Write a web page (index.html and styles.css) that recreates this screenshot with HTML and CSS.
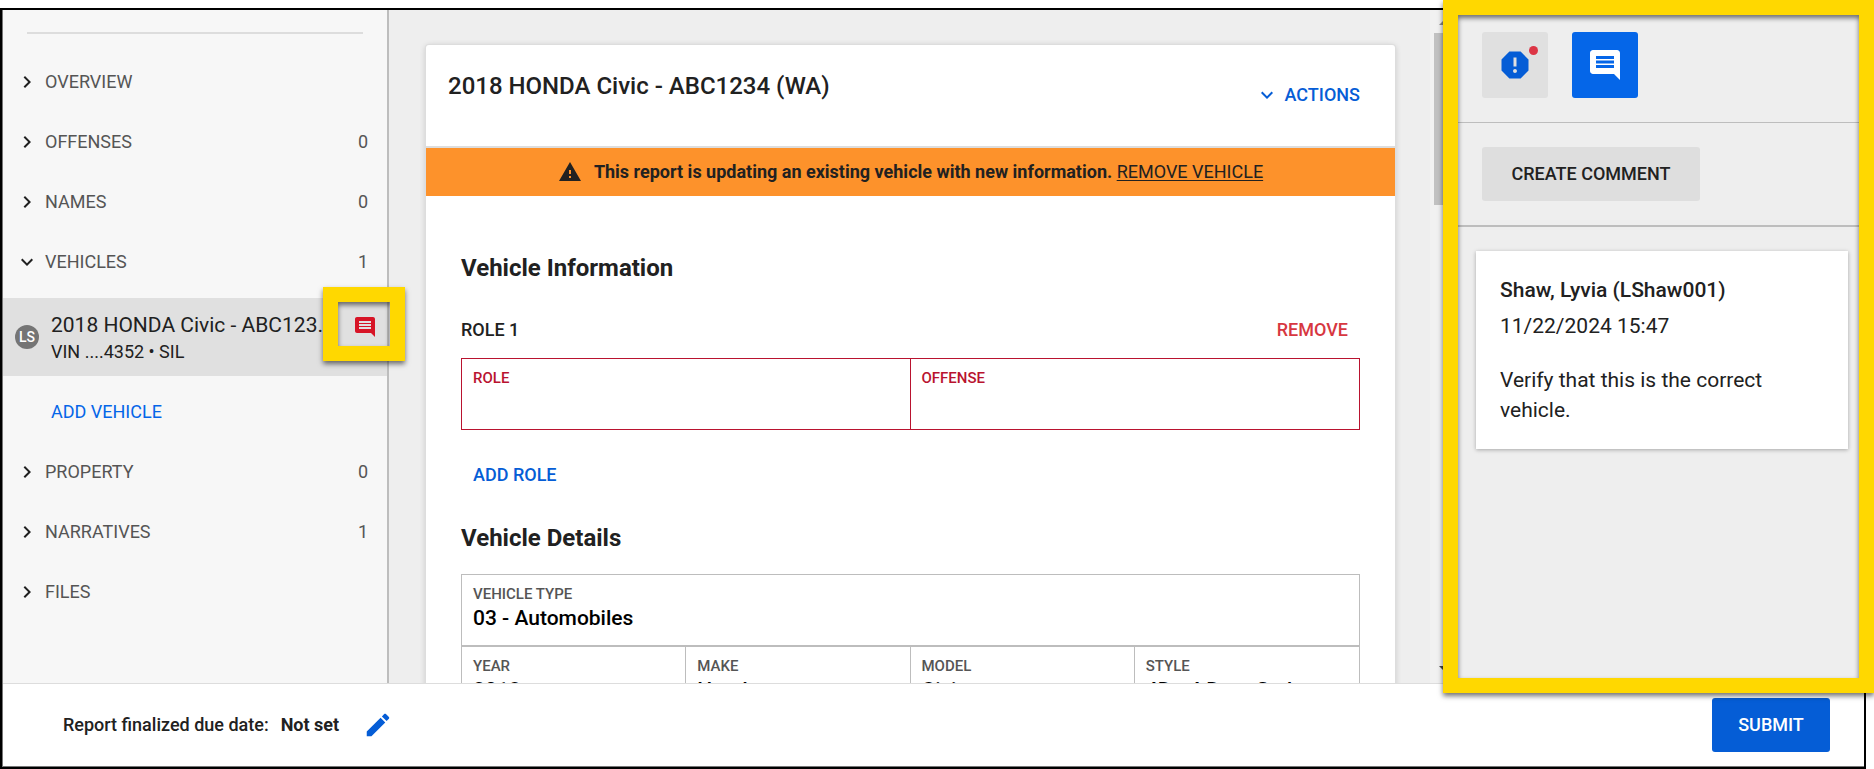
FILE: index.html
```html
<!DOCTYPE html>
<html lang="en">
<head>
<meta charset="utf-8">
<title>Vehicle report</title>
<link rel="stylesheet" href="styles.css">
</head>
<body>
<svg class="sprite" aria-hidden="true">
  <symbol id="right" viewBox="0 0 24 24"><path d="M10 6 8.59 7.41 13.17 12l-4.58 4.59L10 18l6-6z"/></symbol>
  <symbol id="down" viewBox="0 0 24 24"><path d="M7.41 8.59 12 13.17l4.59-4.58L18 10l-6 6-6-6z"/></symbol>
  <symbol id="comment" viewBox="0 0 24 24"><path d="M21.99 4c0-1.1-.89-2-1.99-2H4c-1.1 0-2 .9-2 2v12c0 1.1.9 2 2 2h14l4 4-.01-18zM18 14H6v-2h12v2zm0-3H6V9h12v2zm0-3H6V6h12v2z"/></symbol>
  <symbol id="report" viewBox="0 0 24 24"><path d="M15.73 3H8.27L3 8.27v7.46L8.27 21h7.46L21 15.73V8.27L15.73 3zM12 17.3c-.72 0-1.3-.58-1.3-1.3s.58-1.3 1.3-1.3 1.3.58 1.3 1.3-.58 1.3-1.3 1.3zm1-4.3h-2V7h2v6z"/></symbol>
  <symbol id="warning" viewBox="0 0 24 24"><path d="M1 21h22L12 2 1 21zm12-3h-2v-2h2v2zm0-4h-2v-4h2v4z"/></symbol>
  <symbol id="edit" viewBox="0 0 24 24"><path d="M3 17.25V21h3.75L17.81 9.94l-3.75-3.75L3 17.25zM20.71 7.04c.39-.39.39-1.02 0-1.41l-2.34-2.34c-.39-.39-1.02-.39-1.41 0l-1.83 1.83 3.75 3.75 1.83-1.83z"/></symbol>
</svg>

<div class="frame">
  <div class="workspace">
    <nav class="sidebar" aria-label="Report sections">
      <button class="nav-row"><svg class="icon"><use href="#right"/></svg><span class="nav-name">OVERVIEW</span></button>
      <button class="nav-row"><svg class="icon"><use href="#right"/></svg><span class="nav-name">OFFENSES</span><span>0</span></button>
      <button class="nav-row"><svg class="icon"><use href="#right"/></svg><span class="nav-name">NAMES</span><span>0</span></button>
      <button class="nav-row"><svg class="icon"><use href="#down"/></svg><span class="nav-name">VEHICLES</span><span>1</span></button>
      <div class="vehicle">
        <span class="avatar">LS</span>
        <div class="vehicle-text">
          <div class="vehicle-name">2018 HONDA Civic - ABC1234 (WA)</div>
          <div class="vehicle-vin">VIN ....4352 • SIL</div>
        </div>
        <div class="vehicle-comment">
          <svg class="icon"><use href="#comment"/></svg>
          <div class="callout callout-small"></div>
        </div>
      </div>
      <button class="add-vehicle">ADD VEHICLE</button>
      <button class="nav-row"><svg class="icon"><use href="#right"/></svg><span class="nav-name">PROPERTY</span><span>0</span></button>
      <button class="nav-row"><svg class="icon"><use href="#right"/></svg><span class="nav-name">NARRATIVES</span><span>1</span></button>
      <button class="nav-row"><svg class="icon"><use href="#right"/></svg><span class="nav-name">FILES</span></button>
    </nav>

    <main class="content">
      <section class="card">
        <header class="card-header">
          <h1>2018 HONDA Civic - ABC1234 (WA)</h1>
          <button class="text-button actions"><svg class="icon"><use href="#down"/></svg>ACTIONS</button>
        </header>
        <div class="banner">
          <svg class="icon"><use href="#warning"/></svg>
          <p><strong>This report is updating an existing vehicle with new information.</strong> <a href="#remove">REMOVE VEHICLE</a></p>
        </div>
        <div class="card-body">
          <h2>Vehicle Information</h2>
          <div class="role-header">
            <h3>ROLE 1</h3>
            <button class="text-button danger">REMOVE</button>
          </div>
          <div class="fields invalid">
            <div class="field half"><label for="role">ROLE</label><input id="role" type="text"></div>
            <div class="field half"><label for="offense">OFFENSE</label><input id="offense" type="text"></div>
          </div>
          <button class="text-button add-role">ADD ROLE</button>
          <h2>Vehicle Details</h2>
          <div class="fields details">
            <div class="field full"><label for="type">VEHICLE TYPE</label><input id="type" type="text" value="03 - Automobiles"></div>
            <div class="field"><label for="year">YEAR</label><input id="year" type="text" value="2018"></div>
            <div class="field"><label for="make">MAKE</label><input id="make" type="text" value="Honda"></div>
            <div class="field"><label for="model">MODEL</label><input id="model" type="text" value="Civic"></div>
            <div class="field"><label for="style">STYLE</label><input id="style" type="text" value="4D - 4 Door Sedan"></div>
          </div>
        </div>
      </section>
    </main>

    <div class="scrollbar" aria-hidden="true">
      <svg class="arrow arrow-up" viewBox="0 0 10 5"><path d="M0 5 5 0l5 5z"/></svg>
      <div class="thumb"></div>
      <svg class="arrow arrow-down" viewBox="0 0 10 5"><path d="M0 0l5 5 5-5z"/></svg>
    </div>

    <aside class="panel">
      <div class="panel-tabs">
        <button class="tab" aria-label="Issues"><svg><use href="#report"/></svg><span class="badge"></span></button>
        <button class="tab active" aria-label="Comments"><svg><use href="#comment"/></svg></button>
      </div>
      <div class="panel-create">
        <button class="create">CREATE COMMENT</button>
      </div>
      <article class="comment">
        <h4>Shaw, Lyvia (LShaw001)</h4>
        <time datetime="2024-11-22T15:47">11/22/2024 15:47</time>
        <p>Verify that this is the correct vehicle.</p>
      </article>
      <div class="callout callout-panel"></div>
    </aside>
  </div>

  <footer class="footer">
    <span class="due">Report finalized due date:</span>
    <strong>Not set</strong>
    <button class="edit" aria-label="Edit due date"><svg><use href="#edit"/></svg></button>
    <button class="submit">SUBMIT</button>
  </footer>
</div>
</body>
</html>
```
FILE: styles.css
```css
* { box-sizing: border-box; }

body {
  margin: 0;
  padding: 8px 8px 0 0;
  height: 100vh;
  overflow: hidden;
  background: #fff;
  color: #212121;
  font: 18px/24px Roboto, "Liberation Sans", sans-serif;
}

h1, h2, h3, h4, p { margin: 0; }

button {
  border: 0;
  padding: 0;
  background: none;
  color: inherit;
  font: inherit;
  text-align: left;
  cursor: pointer;
}

svg { fill: currentColor; display: block; flex: none; }
.sprite { display: none; }
.icon { width: 24px; height: 24px; }

.frame {
  display: flex;
  flex-direction: column;
  height: 100%;
  border: 2px solid #000;
  box-shadow: inset 1px -1px 0 #777;
  padding: 0 0 1px 1px;
}

.workspace {
  display: flex;
  flex: 1;
  min-height: 0;
  background: #eee;
}

/* Sidebar */
.sidebar {
  position: relative;
  z-index: 1;
  width: 386px;
  flex: none;
  padding-top: 22px;
  background: #f7f7f7;
  border-right: 2px solid #bdbdbd;
}

.sidebar::before {
  content: "";
  display: block;
  height: 2px;
  margin: 0 24px 18px;
  background: #ddd;
}

.nav-row {
  display: flex;
  align-items: center;
  gap: 6px;
  width: 100%;
  height: 60px;
  padding: 0 19px 0 12px;
  color: #555;
}

.nav-row .icon { color: #212121; }
.nav-name { flex: 1; }

.vehicle {
  display: flex;
  align-items: center;
  gap: 12px;
  height: 78px;
  margin: 6px 0;
  padding: 0 10px 0 12px;
  background: #e0e0e0;
}

.avatar {
  width: 24px;
  height: 24px;
  flex: none;
  border-radius: 50%;
  background: #757575;
  color: #fff;
  font-size: 14px;
  font-weight: 500;
  text-align: center;
}

.vehicle-text { flex: 1; min-width: 0; }

.vehicle-name {
  overflow: hidden;
  font-size: 21px;
  line-height: 30px;
  text-overflow: ellipsis;
  white-space: nowrap;
}

.vehicle-comment {
  position: relative;
  align-self: flex-start;
  margin-top: 17px;
  color: #d71426;
}

.add-vehicle {
  display: block;
  width: 100%;
  height: 60px;
  padding-left: 48px;
  color: #0566e8;
}

/* Highlight frames drawn over the interface */
.callout {
  position: absolute;
  border: 15px solid #ffd800;
  box-shadow: 0 3px 5px rgba(0, 0, 0, 0.55), inset 0 3px 5px rgba(0, 0, 0, 0.55);
  pointer-events: none;
}

.callout-small { top: -28px; left: -30px; width: 82px; height: 74px; }
.callout-panel { top: -10px; right: -10px; bottom: -10px; left: -15px; }

/* Main content */
.content {
  flex: 1;
  min-width: 0;
  overflow: hidden;
  padding: 35px 35px 0 37px;
}

.card {
  background: #fff;
  border-radius: 3px;
  box-shadow: 0 0 0 1px #ddd, 0 1px 6px rgba(0, 0, 0, 0.2);
}

.card-header {
  display: flex;
  justify-content: space-between;
  align-items: flex-start;
  padding: 23px 35px 24px 22px;
  border-bottom: 2px solid #ddd;
}

h1 { font-size: 24px; font-weight: 500; line-height: 36px; }
h2 { font-size: 24px; font-weight: 700; line-height: 36px; }
h3 { font-size: 18px; font-weight: 500; line-height: 36px; }

.text-button { color: #055dd6; font-weight: 500; }
.actions { display: flex; align-items: center; gap: 6px; height: 54px; }

.banner {
  display: flex;
  justify-content: center;
  align-items: center;
  gap: 12px;
  min-height: 48px;
  background: #fd922b;
}

.banner a { color: inherit; text-underline-offset: 2px; }

.card-body { padding: 54px 35px 36px; }

.role-header {
  display: flex;
  justify-content: space-between;
  align-items: center;
  margin: 26px 0 10px;
}

.danger { padding: 0 12px; color: #d73741; }

.fields {
  --line: #bdbdbd;
  display: grid;
  grid-template-columns: repeat(4, 1fr);
  border: 1px solid var(--line);
}

.invalid { --line: #b9132f; }
.details { margin-top: 18px; }

.field {
  height: 70px;
  padding: 10px 11px;
  border-right: 1px solid var(--line);
}

.field:last-child { border-right: 0; }
.half { grid-column: span 2; }
.full { grid-column: span 4; height: 72px; border-right: 0; border-bottom: 2px solid var(--line); }

.field label {
  display: block;
  color: #555;
  font-size: 15px;
  font-weight: 500;
  line-height: 18px;
}

.invalid label { color: #b9132f; }

.field input {
  display: block;
  width: 100%;
  height: 30px;
  border: 0;
  padding: 0;
  background: none;
  color: #000;
  font: 500 21px/30px Roboto, "Liberation Sans", sans-serif;
}

.add-role { display: block; height: 54px; margin: 18px 0; padding: 0 12px; }

/* Scroll track beside the content */
.scrollbar {
  display: flex;
  flex-direction: column;
  align-items: center;
  width: 28px;
  flex: none;
  padding: 10px 0 12px;
  background: #f1f1f1;
}

.arrow { width: 10px; height: 5px; color: #444; }
.arrow-up { color: #888; margin-bottom: 8px; }
.arrow-down { margin-top: auto; }
.thumb { width: 20px; height: 172px; background: #c1c1c1; }

/* Comments panel */
.panel { position: relative; z-index: 1; width: 406px; flex: none; }

.panel-tabs {
  display: flex;
  gap: 24px;
  padding: 22px 24px 24px;
  border-bottom: 1px solid #bdbdbd;
}

.tab {
  position: relative;
  padding: 15px;
  border-radius: 3px;
  background: #e0e0e0;
  color: #055dd6;
}

.tab svg { width: 36px; height: 36px; }
.active { background: #0566e8; color: #fff; }

.badge {
  position: absolute;
  top: 14px;
  right: 10px;
  width: 9px;
  height: 9px;
  border-radius: 50%;
  background: #dc3545;
}

.panel-create { padding: 24px; border-bottom: 2px solid #bdbdbd; }

.create, .submit {
  height: 54px;
  padding: 0 24px;
  border-radius: 3px;
  font-weight: 500;
  text-align: center;
}

.create { display: block; min-width: 218px; background: #dedede; }

.comment {
  margin: 24px 16px 0 18px;
  padding: 24px;
  background: #fff;
  box-shadow: 0 1px 4px rgba(0, 0, 0, 0.3);
  font-size: 21px;
  line-height: 30px;
}

.comment h4 { font-weight: 500; margin-bottom: 6px; }
.comment time { display: block; margin-bottom: 24px; }

/* Footer */
.footer {
  display: flex;
  align-items: center;
  gap: 12px;
  padding: 14px 34px 14px 60px;
  border-top: 1px solid #ddd;
  background: #fff;
}

.due { font-weight: 500; }
.edit { margin-left: 12px; color: #055dd6; }
.edit svg { width: 30px; height: 30px; }
.submit { min-width: 118px; margin-left: auto; background: #055dd6; color: #fff; }
```
